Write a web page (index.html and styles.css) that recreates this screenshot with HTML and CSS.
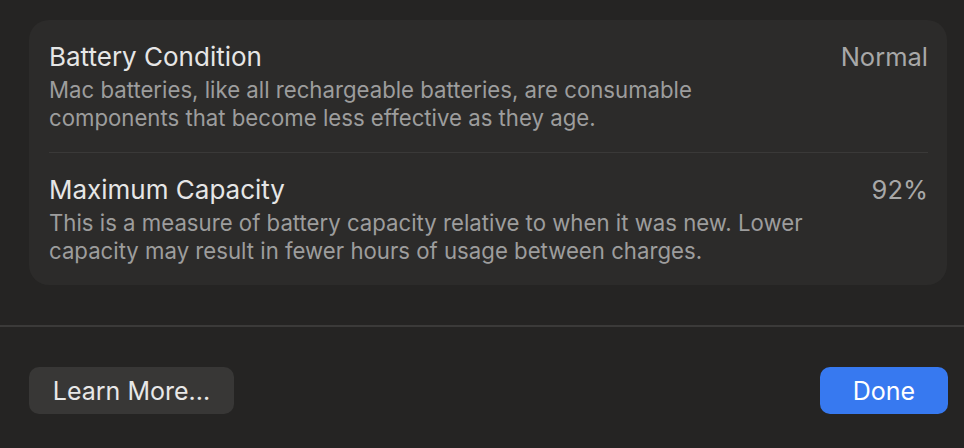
FILE: index.html
```html
<!DOCTYPE html>
<html lang="en">
<head>
    <meta charset="UTF-8">
    <meta name="viewport" content="width=device-width, initial-scale=1.0">
    <title>Battery Health</title>
    <link rel="stylesheet" href="styles.css">
</head>
<body>
    <div class="sheet">
        <!-- Battery info card -->
        <div class="card">
            <div class="row">
                <div class="row-text">
                    <div class="row-title">Battery Condition</div>
                    <div class="row-desc">Mac batteries, like all rechargeable batteries, are consumable<br>components that become less effective as they age.</div>
                </div>
                <div class="row-value">Normal</div>
            </div>
            <div class="separator"></div>
            <div class="row">
                <div class="row-text">
                    <div class="row-title">Maximum Capacity</div>
                    <div class="row-desc">This is a measure of battery capacity relative to when it was new. Lower<br>capacity may result in fewer hours of usage between charges.</div>
                </div>
                <div class="row-value">92%</div>
            </div>
        </div>

        <!-- Footer with buttons -->
        <div class="footer">
            <button class="btn btn-secondary">Learn More...</button>
            <button class="btn btn-primary">Done</button>
        </div>
    </div>
</body>
</html>
```

FILE: styles.css
```css
/* Base */
body {
    margin: 0;
    background-color: #252423;
    font-family: Inter, "Noto Sans", sans-serif;
    overflow: hidden;
}
.sheet {
    width: 964px;
    height: 448px;
    padding-top: 20px;
    box-sizing: border-box;
}
/* Card */
.card {
    margin: 0 17px 0 29px;
    padding: 0 19px 0 20px;
    background-color: #2c2b2a;
    border-radius: 20px;
}
.row {
    display: flex;
    justify-content: space-between;
    padding: 22px 0 20px;
}
.row-title {
    font-size: 26px;
    line-height: 30px;
    color: #e6e6e6;
    margin-bottom: 4px;
}
.row-desc {
    font-size: 22.2px;
    line-height: 28px;
    color: #9d9d9d;
}
.row-value {
    font-size: 25.5px;
    line-height: 30px;
    color: #a8a8a8;
}
.separator {
    height: 1px;
    background-color: #3a3938;
}
/* Footer */
.footer {
    margin-top: 40px;
    border-top: 2px solid #3b3a39;
    padding: 40px 16px 0 29px;
    display: flex;
    justify-content: space-between;
}
.btn {
    height: 47px;
    padding: 0;
    border: none;
    border-radius: 10px;
    font-family: Inter, "Noto Sans", sans-serif;
    font-size: 25px;
    cursor: pointer;
}
.btn-secondary {
    width: 205px;
    background-color: #383736;
    color: #e8e8e8;
}
.btn-primary {
    width: 128px;
    background-color: #3779f0;
    color: #ffffff;
}
```
